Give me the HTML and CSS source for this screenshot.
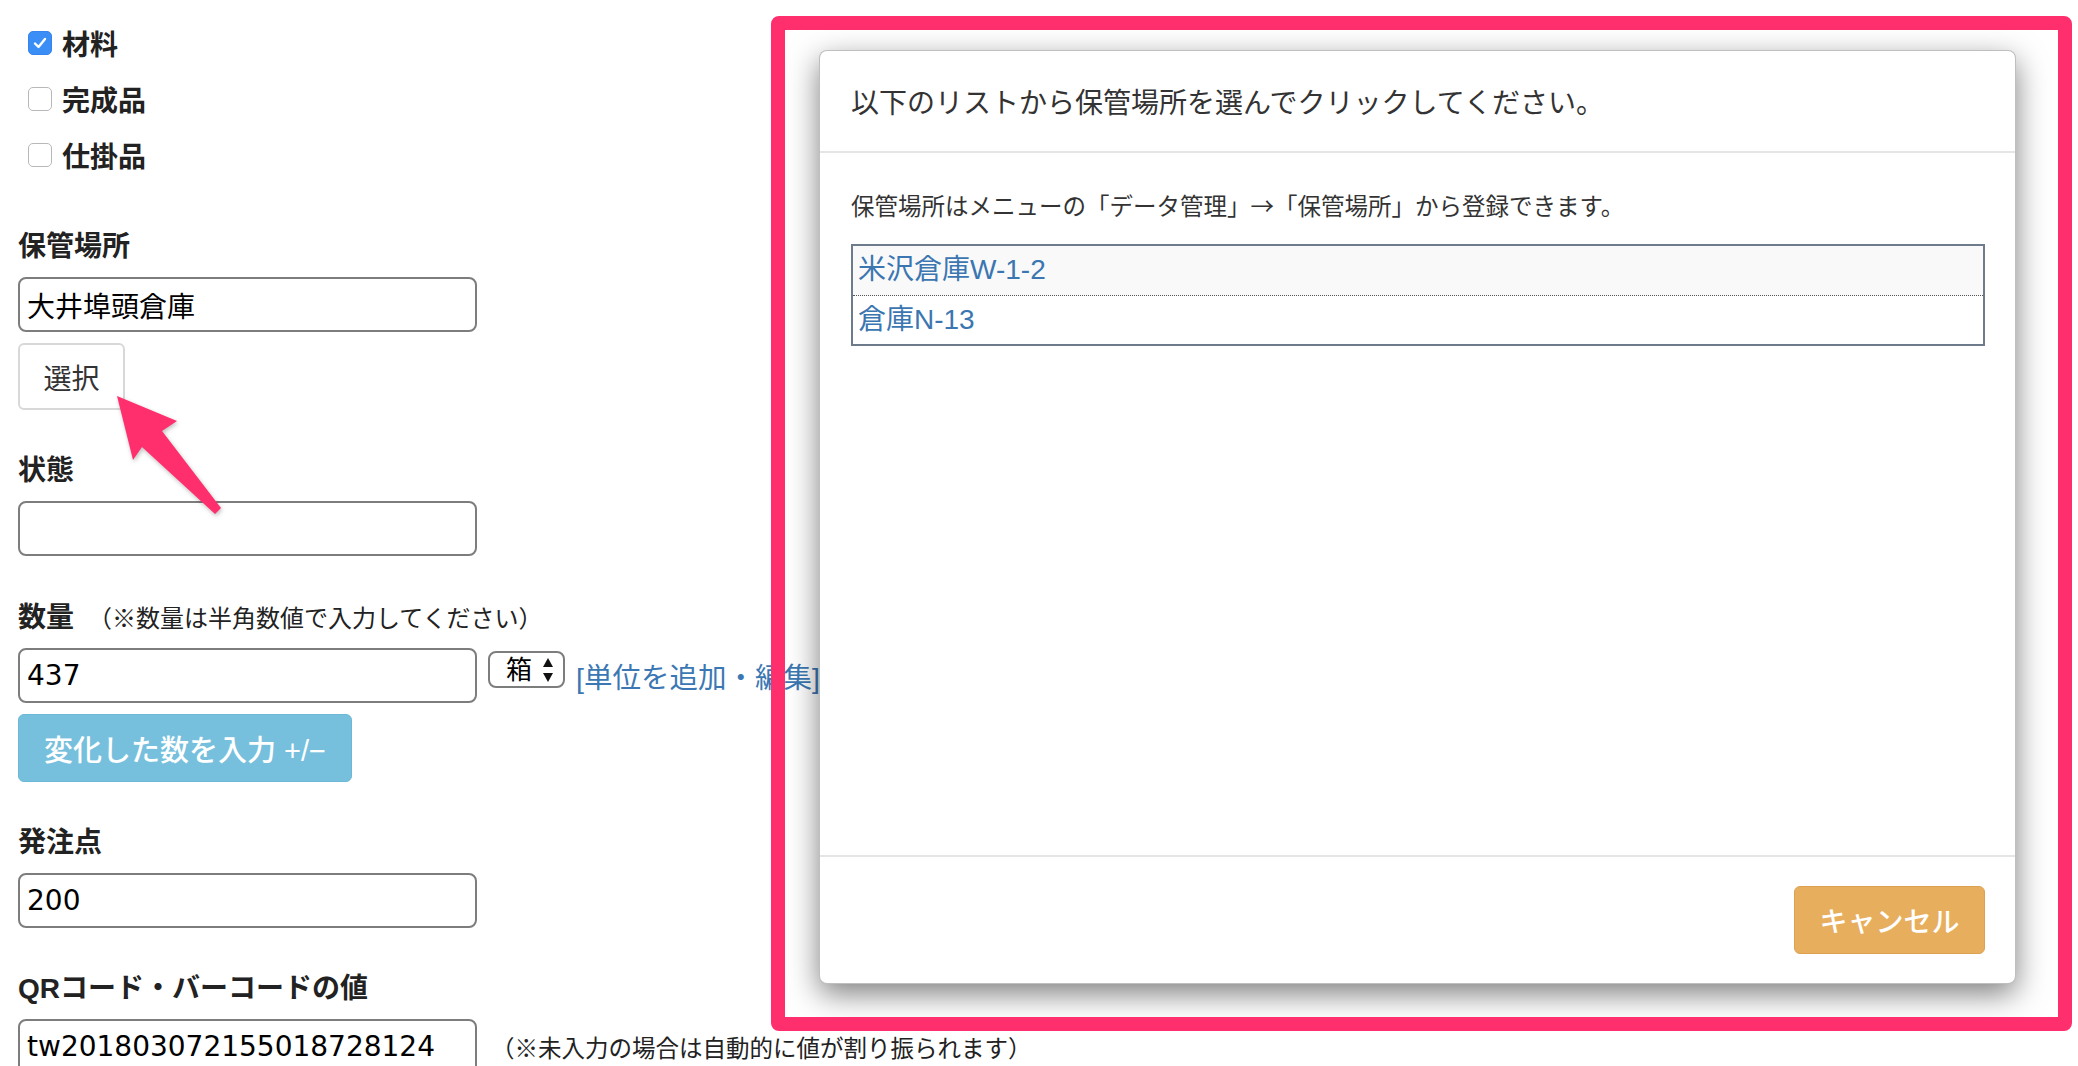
FILE: index.html
```html
<!DOCTYPE html>
<html lang="ja">
<head>
    <meta charset="UTF-8">
    <title>在庫登録</title>
    <link rel="stylesheet" href="styles.css">
</head>
<body>
    <div class="page">
        <div class="check-list">
            <label class="check-row">
                <span class="check checked">
                    <svg width="18" height="18" viewBox="0 0 18 18"><polyline points="4,9.5 7.5,13 14,5" fill="none" stroke="#fff" stroke-width="2.4" stroke-linecap="round" stroke-linejoin="round"/></svg>
                </span>
                材料
            </label>
            <label class="check-row"><span class="check"></span>完成品</label>
            <label class="check-row"><span class="check"></span>仕掛品</label>
        </div>

        <div class="form-group">
            <label class="field-label">保管場所</label>
            <input class="text-input" type="text" value="大井埠頭倉庫">
            <button type="button" class="btn btn-default">選択</button>
        </div>

        <div class="form-group">
            <label class="field-label">状態</label>
            <input class="text-input" type="text" value="">
        </div>

        <div class="form-group">
            <label class="field-label">数量<span class="note qty-note">（※数量は半角数値で入力してください）</span></label>
            <div class="qty-row">
                <input class="text-input" type="text" value="437">
                <span class="unit-select">
                    箱
                    <svg width="12" height="26" viewBox="0 0 12 26"><polygon points="6,1 11,10 1,10" fill="#111"/><polygon points="1,16 11,16 6,25" fill="#111"/></svg>
                </span>
                <a class="unit-link" href="#">[単位を追加・編集]</a>
            </div>
            <button type="button" class="btn btn-info">変化した数を入力 +/−</button>
        </div>

        <div class="form-group">
            <label class="field-label">発注点</label>
            <input class="text-input" type="text" value="200">
        </div>

        <div class="form-group">
            <label class="field-label">QRコード・バーコードの値</label>
            <div class="qr-row">
                <input class="text-input" type="text" value="tw201803072155018728124">
                <span class="note qr-note">（※未入力の場合は自動的に値が割り振られます）</span>
            </div>
        </div>
    </div>

    <!-- 赤枠と矢印は注釈 -->
    <div class="annotation-frame"></div>
    <svg class="annotation-arrow" width="260" height="540" viewBox="0 0 260 540">
        <polygon points="117,396 177,421 162,431 221,508 215,514 142,447 133,460" fill="#ff2f6e"/>
    </svg>

    <div class="modal">
        <div class="modal-header">以下のリストから保管場所を選んでクリックしてください。</div>
        <div class="modal-body">
            <p class="modal-text">保管場所はメニューの「データ管理」→「保管場所」から登録できます。</p>
            <ul class="location-list">
                <li class="location-item"><a href="#">米沢倉庫W-1-2</a></li>
                <li class="location-item"><a href="#">倉庫N-13</a></li>
            </ul>
        </div>
        <div class="modal-footer">
            <button type="button" class="btn btn-warning">キャンセル</button>
        </div>
    </div>
</body>
</html>
```

FILE: styles.css
```css
* {
    margin: 0;
    padding: 0;
    box-sizing: border-box;
}

body {
    position: relative;
    width: 2078px;
    height: 1066px;
    overflow: hidden;
    background: #fff;
    color: #222;
    font-family: "Liberation Sans", "Noto Sans CJK JP", sans-serif;
}

.page {
    padding: 15px 18px 0;
}

.check-list {
    margin-bottom: 46px;
}

.check-row {
    display: flex;
    align-items: center;
    gap: 10px;
    height: 56px;
    padding-left: 10px;
    font-size: 28px;
    font-weight: 700;
}

.check {
    display: flex;
    align-items: center;
    justify-content: center;
    width: 24px;
    height: 24px;
    background: #fff;
    border: 1px solid #b8b8b8;
    border-radius: 5px;
}

.check.checked {
    background: #3b8ef5;
    border-color: #3585ec;
}

.form-group {
    margin-bottom: 43px;
}

.field-label {
    display: block;
    margin-bottom: 12px;
    font-size: 28px;
    font-weight: 700;
    line-height: 36px;
}

.note {
    font-family: "Noto Sans CJK JP", sans-serif;
    font-weight: 400;
    color: #222;
}

.qty-note {
    margin-left: 14px;
    font-size: 24px;
}

.text-input {
    display: block;
    width: 459px;
    height: 55px;
    padding: 0 7px;
    border: 2px solid #7d7d7d;
    border-radius: 8px;
    background: #fff;
    color: #000;
    font-family: "DejaVu Sans", "Noto Sans CJK JP", sans-serif;
    font-size: 28px;
    outline: none;
}

.qty-row,
.qr-row {
    display: flex;
    align-items: flex-start;
}

.unit-select {
    display: flex;
    align-items: center;
    justify-content: space-between;
    width: 77px;
    height: 37px;
    margin: 3px 0 0 11px;
    padding: 0 9px 0 16px;
    border: 2px solid #7d7d7d;
    border-radius: 8px;
    font-size: 26px;
    line-height: 1;
    color: #000;
}

.unit-link {
    align-self: center;
    margin-left: 11px;
    color: #3b78b3;
    font-size: 28.5px;
    text-decoration: none;
    white-space: nowrap;
}

.qr-note {
    align-self: center;
    margin-left: 14px;
    font-size: 23.5px;
    white-space: nowrap;
}

.btn {
    display: block;
    height: 67px;
    padding: 0 24px;
    border: 1px solid transparent;
    border-radius: 6px;
    font-family: "Liberation Sans", "Noto Sans CJK JP", sans-serif;
    font-size: 28px;
    white-space: nowrap;
    cursor: pointer;
}

.btn-default {
    width: 107px;
    margin-top: 11px;
    padding: 0;
    background: #fff;
    border: 2px solid #d8d8d8;
    color: #333;
}

.btn-info {
    width: 334px;
    height: 68px;
    margin-top: 11px;
    padding: 0;
    background: #77c0dd;
    border-color: #6cb8d6;
    color: #fff;
    font-size: 29px;
    font-weight: 500;
}

.btn-warning {
    width: 191px;
    height: 68px;
    padding: 0;
    background: #e7ae5e;
    border-color: #dca252;
    color: #fff;
    font-weight: 500;
}

/* 注釈 */
.annotation-frame {
    position: absolute;
    left: 771px;
    top: 16px;
    width: 1301px;
    height: 1015px;
    border: 14px solid #ff2f6e;
    border-radius: 8px;
    z-index: 3;
}

.annotation-arrow {
    position: absolute;
    left: 0;
    top: 0;
    z-index: 3;
    filter: drop-shadow(1px 2px 2px rgba(0, 0, 0, 0.25));
}

/* モーダル */
.modal {
    position: absolute;
    left: 819px;
    top: 50px;
    width: 1197px;
    height: 934px;
    display: flex;
    flex-direction: column;
    background: #fff;
    border: 1px solid rgba(0, 0, 0, 0.25);
    border-radius: 8px;
    box-shadow: 0 10px 30px rgba(0, 0, 0, 0.5);
    z-index: 2;
}

.modal-header {
    display: flex;
    align-items: center;
    height: 102px;
    padding: 0 31px;
    border-bottom: 2px solid #e5e5e5;
    color: #333;
    font-family: "Noto Sans CJK JP", sans-serif;
    font-size: 28px;
}

.modal-body {
    flex: 1;
    padding: 35px 30px 0 31px;
}

.modal-text {
    margin-bottom: 22px;
    color: #333;
    font-family: "Noto Sans CJK JP", sans-serif;
    font-size: 23.5px;
    line-height: 34px;
}

.location-list {
    list-style: none;
    border: 2px solid #6d7b8a;
}

.location-item {
    height: 48px;
    padding-left: 5px;
    font-size: 28px;
    line-height: 48px;
}

.location-item:first-child {
    height: 50px;
    background: #f9f9f9;
    border-bottom: 1px dotted #555;
}

.location-item a {
    color: #3b76b1;
    text-decoration: none;
}

.modal-footer {
    display: flex;
    justify-content: flex-end;
    padding: 29px 30px;
    border-top: 2px solid #e5e5e5;
}
```
